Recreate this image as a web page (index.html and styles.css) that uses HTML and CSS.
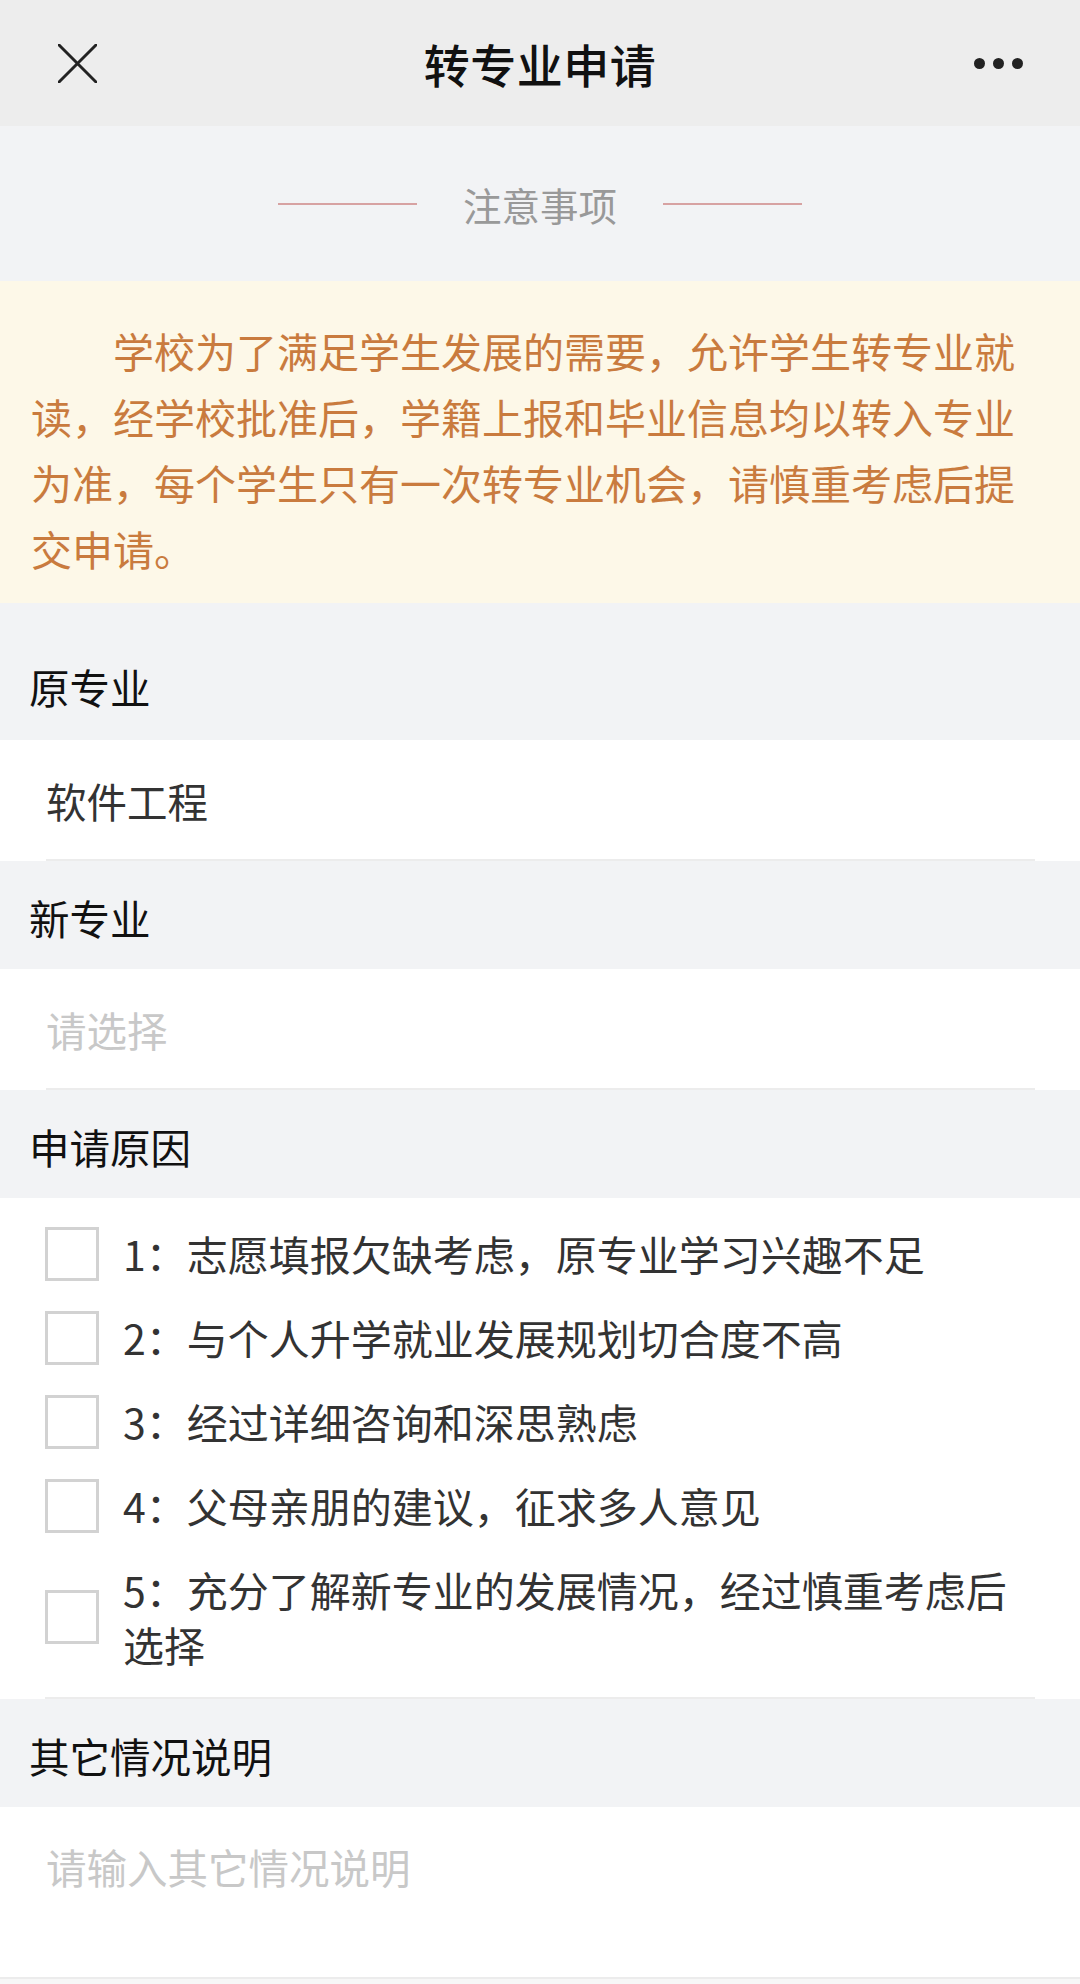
FILE: index.html
```html
<!DOCTYPE html>
<html lang="zh-CN">
<head>
<meta charset="utf-8">
<title>转专业申请</title>
<link rel="stylesheet" href="styles.css">
</head>
<body>
<header class="navbar">
  <div class="nav-left">
    <svg class="icon-close" viewBox="0 0 40 40" width="40" height="40" aria-hidden="true">
      <path d="M1 1 L39 39 M39 1 L1 39" stroke="#222" stroke-width="3" stroke-linecap="round" fill="none"/>
    </svg>
  </div>
  <h1 class="nav-title">转专业申请</h1>
  <div class="nav-right">
    <span class="dots"><i></i><i></i><i></i></span>
  </div>
</header>

<div class="notice-title">
  <span class="rule"></span>
  <span class="notice-title-text">注意事项</span>
  <span class="rule"></span>
</div>

<p class="notice">学校为了满足学生发展的需要，允许学生转专业就读，经学校批准后，学籍上报和毕业信息均以转入专业为准，每个学生只有一次转专业机会，请慎重考虑后提交申请。</p>

<section class="field">
  <div class="field-label field-label--first">原专业</div>
  <div class="field-body"><div class="field-inner field-value">软件工程</div></div>
</section>

<section class="field">
  <div class="field-label">新专业</div>
  <div class="field-body"><div class="field-inner field-placeholder">请选择</div></div>
</section>

<section class="field">
  <div class="field-label">申请原因</div>
  <div class="field-body">
    <ul class="checklist">
      <li class="check-item"><span class="checkbox"></span><span class="check-text">1：志愿填报欠缺考虑，原专业学习兴趣不足</span></li>
      <li class="check-item"><span class="checkbox"></span><span class="check-text">2：与个人升学就业发展规划切合度不高</span></li>
      <li class="check-item"><span class="checkbox"></span><span class="check-text">3：经过详细咨询和深思熟虑</span></li>
      <li class="check-item"><span class="checkbox"></span><span class="check-text">4：父母亲朋的建议，征求多人意见</span></li>
      <li class="check-item"><span class="checkbox"></span><span class="check-text">5：充分了解新专业的发展情况，经过慎重考虑后选择</span></li>
    </ul>
  </div>
</section>

<section class="field">
  <div class="field-label">其它情况说明</div>
  <div class="field-body field-body--textarea"><div class="textarea-placeholder">请输入其它情况说明</div></div>
</section>
</body>
</html>
```

FILE: styles.css
```css
* {
  box-sizing: border-box;
}

html, body {
  margin: 0;
  padding: 0;
}

body {
  width: 1080px;
  min-height: 1984px;
  background: #f7f7f7;
  font-family: "Noto Sans CJK SC", "Noto Sans", sans-serif;
  color: #333;
}

/* Navigation bar */
.navbar {
  height: 126px;
  background: #ededed;
  display: grid;
  grid-template-columns: 1fr auto 1fr;
  align-items: center;
}

.nav-left {
  padding-left: 58px;
  display: flex;
  align-items: center;
}

.icon-close {
  width: 39px;
  height: 39px;
  display: block;
}

.nav-title {
  margin: 0;
  font-size: 46px;
  font-weight: 500;
  color: #111;
  line-height: 60px;
  letter-spacing: 0.5px;
}

.nav-right {
  display: flex;
  justify-content: flex-end;
  padding-right: 57px;
}

.dots {
  display: flex;
  gap: 8px;
}

.dots i {
  display: block;
  width: 11px;
  height: 11px;
  border-radius: 50%;
  background: #222;
}

/* Notice heading */
.notice-title {
  height: 155px;
  background: #f2f3f5;
  display: flex;
  align-items: center;
  justify-content: center;
  gap: 46px;
}

.rule {
  width: 139px;
  height: 2px;
  background: #d7a2a2;
}

.notice-title-text {
  font-size: 38.5px;
  line-height: 44px;
  color: #999;
}

/* Notice paragraph */
.notice {
  margin: 0;
  background: #fdf8e8;
  padding: 36px 31px 22px;
  font-size: 41px;
  line-height: 66px;
  text-indent: 2em;
  color: #c97b3e;
}

/* Form fields */
.field-label {
  background: #f2f3f5;
  padding: 35px 29px 29px;
  font-size: 40.5px;
  line-height: 44px;
  color: #111;
}

.field-label--first {
  padding-top: 62px;
  padding-bottom: 31px;
}

.field-body {
  background: #fff;
}

.field-inner {
  margin: 0 45px 0 46px;
  padding: 39px 0 36px;
  border-bottom: 2px solid #ececec;
  font-size: 40.5px;
  line-height: 44px;
}

.field-value {
  color: #333;
}

.field-placeholder {
  color: #c8c8c8;
}

/* Checklist */
.checklist {
  list-style: none;
  margin: 0 45px;
  padding: 28px 0 25px;
  border-bottom: 2px solid #ececec;
  display: flex;
  flex-direction: column;
  gap: 29px;
}

.check-item {
  display: flex;
  align-items: center;
  gap: 24px;
}

.checkbox {
  flex: 0 0 54px;
  width: 54px;
  height: 54px;
  border: 3px solid #d2d2d2;
  background: #fff;
}

.check-text {
  font-size: 41px;
  line-height: 55px;
  color: #333;
}

/* Textarea */
.field-body--textarea {
  height: 172px;
  padding: 38px 0 0 46px;
  border-bottom: 2px solid #ececec;
}

.textarea-placeholder {
  font-size: 40.5px;
  line-height: 44px;
  color: #c8c8c8;
}
```
